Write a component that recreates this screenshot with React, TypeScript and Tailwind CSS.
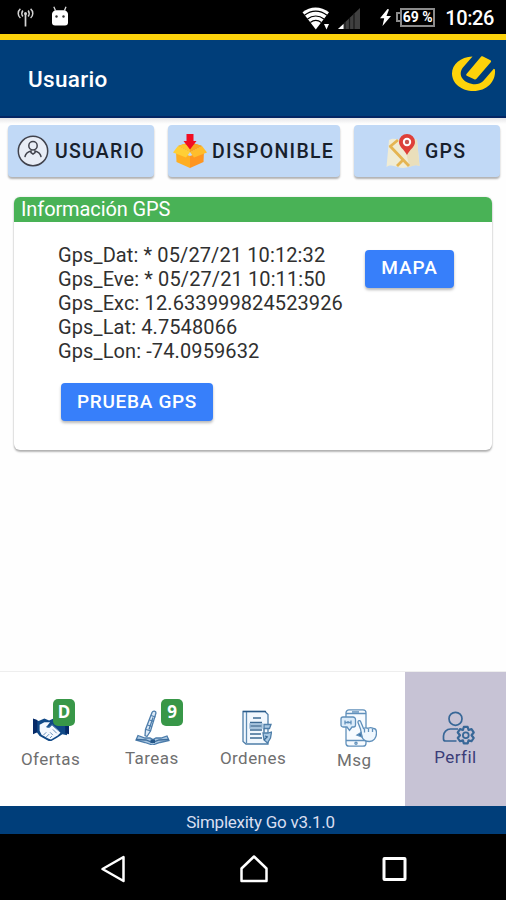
import type { ReactNode } from 'react';

type Tab = {
  label: string;
  icon: ReactNode;
  iconClass: string;
  labelClass: string;
  badge?: string;
  badgeClass?: string;
  active?: boolean;
};

const GPS_ROWS = [
  'Gps_Dat: * 05/27/21 10:12:32',
  'Gps_Eve: * 05/27/21 10:11:50',
  'Gps_Exc: 12.633999824523926',
  'Gps_Lat: 4.7548066',
  'Gps_Lon: -74.0959632',
];

function AntennaIcon() {
  return (
    <svg width="17" height="19" viewBox="0 0 17 19" fill="none" stroke="#d4d4d4" strokeWidth="1.5">
      <path d="M8.5 6v12.5" strokeWidth="1.7" />
      <circle cx="8.5" cy="5.5" r="1.5" fill="#d4d4d4" stroke="none" />
      <path d="M5.8 2.5c-1.2 1.8-1.2 4.2 0 6M11.2 2.5c1.2 1.8 1.2 4.2 0 6" />
      <path d="M3.4.9C.5 3.3.5 7.7 3.4 10M13.6.9c2.9 2.4 2.9 6.8 0 9.1" />
    </svg>
  );
}

function RobotIcon() {
  return (
    <svg width="18" height="20" viewBox="0 0 18 20">
      <path d="M4.5 4.5 2.8.8M13.5 4.5 15 .8" stroke="#ddd" strokeWidth="1.3" />
      <path d="M1 7.500c.7-2 2-3 4-3.300h8c2 .3 3.300 1.300 4 3.300v9a3 3 0 0 1-3 3H4a3 3 0 0 1-3-3z" fill="#fff" />
      <circle cx="5.5" cy="10.5" r="1.2" fill="#333" />
      <circle cx="12.5" cy="10.5" r="1.2" fill="#333" />
    </svg>
  );
}

function WifiIcon() {
  return (
    <svg width="28" height="24" viewBox="0 0 28 24">
      <path d="M.5 5.2C8-1.2 19-1.2 27 5.2L13.8 22.5z" fill="#fff" />
      <g fill="none" stroke="#000" strokeWidth="1.2">
        <path d="M2.5 8.3c7-5.6 15.5-5.6 22.5 0" />
        <path d="M5.5 12c5-4 11.5-4 16.5 0" />
        <path d="M8.3 15.5c3.4-2.5 7.6-2.5 11 0" />
      </g>
      <path d="M21 15h7v3l-3.5 5.5L21 18z" fill="#000" />
      <path d="M22 17h5l-2.5 5.5z" fill="#fff" />
    </svg>
  );
}

function SignalIcon() {
  return (
    <svg width="22" height="21" viewBox="0 0 22 21">
      <path d="M0 21 22 0v21z" fill="#404040" />
      <path d="M7 14v7M11.5 10v11M16 5.5V21" stroke="#1a1a1a" strokeWidth="1.2" />
      <path d="M0 21l5.5-5v5z" fill="#fff" />
    </svg>
  );
}

function BatteryIcon() {
  return (
    <div className="flex h-[20px] items-center">
      <div className="h-2.5 w-[4px] border-2 border-r-0 border-[#8b8b8b]" />
      <div className="flex h-[19px] w-[35px] items-center justify-center border-2 border-[#8b8b8b]">
        <span className="text-[14px] leading-none font-bold whitespace-nowrap text-white">69 %</span>
      </div>
    </div>
  );
}

function StatusBar() {
  return (
    <div className="flex h-[34px] shrink-0 items-start bg-black">
      <div className="pt-2 pl-[17px]">
        <AntennaIcon />
      </div>
      <div className="pt-1.5 pl-[17px]">
        <RobotIcon />
      </div>
      <div className="ml-auto flex">
        <div className="pt-[7px] pr-[8px]">
          <WifiIcon />
        </div>
        <div className="pt-2 pr-[20px]">
          <SignalIcon />
        </div>
        <svg className="mt-[9px] mr-[5px]" width="11" height="17" viewBox="0 0 11 17">
          <path d="M7.500 0 0 9.300h4.200L2.500 17 11 7H6.500L9 .5z" fill="#fff" />
        </svg>
        <div className="pt-[7px] pr-[10px]">
          <BatteryIcon />
        </div>
        <span className="mr-[12px] pt-[7px] text-[20px] leading-[22px] font-medium tracking-[-0.4px] text-white">
          10:26
        </span>
      </div>
    </div>
  );
}

function BrandLogo() {
  return (
    <svg width="44" height="36" viewBox="0 0 44 36" fill="#fed30a">
      <path d="M20.500.5C8.500 1 0 8.500 0 17.500 0 27.500 9.500 35 21.500 35 34.500 35 44 26 43 13.500l-1.200-.8L31 25.300c-4 3.700-10 3.700-15.500 1.200C8.500 23.300 7 17 10.500 12z" />
      <path d="M29 .8c.6-.6 1.200-.6 2-.2l7.500 3.600c.7.5.8 1.200.2 2L24.500 22.800c-.7.700-1.500.7-2.300.4l-7.500-3.500c-.6-.4-.7-1-.2-1.700z" />
    </svg>
  );
}

function UserCircleIcon() {
  return (
    <svg width="32" height="32" viewBox="0 0 32 32" fill="none" stroke="#40424c">
      <circle cx="16" cy="16" r="14.7" fill="#e8edf6" strokeWidth="1.5" />
      <circle cx="16" cy="10.8" r="4.2" strokeWidth="1.5" />
      <path
        d="M8 21.5c.6-2.700 3-4.700 6-5.500v1.500l2 1.500 2-1.500V16c3 .8 5.400 2.800 6 5.500"
        strokeWidth="1.5"
        strokeLinecap="round"
      />
    </svg>
  );
}

function BoxIcon() {
  return (
    <svg width="34" height="34" viewBox="0 0 34 34">
      <path d="M3 17l14 5v12L3.5 28z" fill="#ffae21" />
      <path d="M31 17l-14 5v12l13.5-6z" fill="#ff9520" />
      <path d="M5 12l12-4 12 4-12 6z" fill="#e9971c" />
      <path d="M5 12l12 6-4 5.5L0 18.5z" fill="#ffcf35" />
      <path d="M29 12l-12 6 4 5.5 13-5z" fill="#ffbd2c" />
      <path d="M5 12l6-2 6 2v6z" fill="#ffc52f" />
      <path d="M29 12l-6-2-6 2v6z" fill="#f9a520" />
      <path d="M13.5 0h7v7h3L17 15.5 10.5 7h3z" fill="#f20d22" />
    </svg>
  );
}

function MapPinIcon() {
  return (
    <svg width="34" height="34" viewBox="0 0 34 34">
      <path d="M3 6c5-3 9 0 14 0s9-3 14 0l2.500 26c-6-3-10 2-16.500 2-6 0-11-5-16.500-1z" fill="#f0ecd4" />
      <path d="M17 6c5 0 9-3 14 0l2.500 26c-4-2-7 0-10 1z" fill="#eadfbb" />
      <path d="M3.5 13 12 6M4 12l19 20M11 32l7-7" fill="none" stroke="#e5b552" strokeWidth="2.8" />
      <path d="M21 0a8 8 0 0 0-8 8c0 5 5 7 8 13 3-6 8-8 8-13a8 8 0 0 0-8-8z" fill="#df4039" />
      <circle cx="21" cy="8" r="4.2" fill="#fff" />
      <circle cx="21" cy="8" r="2.2" fill="#c85550" />
    </svg>
  );
}

function HandshakeIcon() {
  return (
    <svg width="36" height="25" viewBox="0 0 38 26">
      <path d="M0 3l6 2 6-2.500 5 2 7-3 7 2.500 5-1v17l-5-1-6 4-7 4-11-6-3-4-4 .5z" fill="#114987" />
      <path d="M0 2.500 4.500 4v13L0 19zM38 3l-4 1.500V18l4 1z" fill="#062a68" />
      <path d="M7 9l5-2.500h6l-4 5c2 1.500 4 .5 6-2l9 8-3 3-7 4-3-1-7-4-2-4z" fill="#f5f9ff" />
      <path
        d="M14 11c2 1.500 4 .5 6-2l8 7M21 14l4 4M18 17l3 3M14 17l-3 3M17 19l-3 3M20 21l-2 2"
        fill="none"
        stroke="#5c88b5"
        strokeWidth="1"
      />
    </svg>
  );
}

function PenBookIcon() {
  return (
    <svg width="36" height="35" viewBox="0 0 36 35" fill="none" stroke="#4d7dab" strokeWidth="1.3">
      <path d="M17 2.500c1-2.200 4-1.800 4 .5L15.500 21l-3.500 5.500-2-1 .5-6z" fill="#dceaf7" />
      <path d="M16 5.500l4.500 1.500M14.500 10l4.500 1.500M12.500 15l4.500 1.500M11 19.500l5 1.500M18 7.500l-4 12" />
      <path d="M3 25.500l7 2.500h5l3 1.500 3-1.500h5l6-2 2 4.500-9 2-7.500 2.500-7.500-2.500L1 30z" fill="#a9c7e2" />
      <path d="M1 29.500l10 .5 6.500 2.500L24 30l10-.5" stroke="#3d6d9d" />
      <path d="M15.500 29.500h4.500V33h-4.500z" fill="#255789" stroke="none" />
    </svg>
  );
}

function OrdersIcon() {
  return (
    <svg width="30" height="35" viewBox="0 0 30 35" fill="none" stroke="#4d7da8" strokeWidth="1.3">
      <path d="M1 1.500h22l3 3V34H4l-3-2.500z" fill="#f2f8fe" />
      <path d="M4.500 2v31" stroke="#5d8bb3" />
      <path d="M1 1.500h23" stroke="#2a5a88" />
      <path d="M11 8h8M8 12.500h12M8 16h12M8 20h12M8 24h11M8 28h12" stroke="#3e6b94" />
      <path d="M8 14h12v4H8z" stroke="#8eb2d2" />
      <path d="M22 14.500h7l-1.500 4H22zM21 23h5l3.500-1-1 6-3 5-3.500-3z" fill="#a8c8e3" />
      <path d="M22 18.500v4M23 26l3 1M22 30l3-3" stroke="#3a6b97" />
    </svg>
  );
}

function MessageIcon() {
  return (
    <svg width="37" height="38" viewBox="0 0 37 38" fill="none" stroke="#6090bb" strokeWidth="1.3">
      <rect x="6" y=".8" width="20" height="36.4" rx="3" fill="#f7fbff" />
      <path d="M6 4.500h20M6 31.500h20M12 2.800h7" />
      <circle cx="16" cy="34.3" r="1.1" />
      <path
        d="M3 8h10a2.500 2.500 0 0 1 2.500 2.500V16a2 2 0 0 1-2 2H12l-2.500 3.500L7 18H3a2 2 0 0 1-2-2v-6a2 2 0 0 1 2-2z"
        fill="#dcecfa"
      />
      <path d="M5 11.500v4M8 12v2.500M11 11.500v4M5 13.500h6" />
      <path
        d="M20.500 20l-2.500-6.500c-.3-2 2-2.500 2.700-.8l2.800 6.800c2-1.500 4 0 5-.3 3-1.500 4 .3 5 .3 2 0 3 1.500 3 4.500 0 5-3 8.500-7 8.500-4.500 0-6.500-1.500-7.500-4.500z"
        fill="#eff7fe"
      />
      <path d="M24.500 20v3.500M28.500 20v3M32.500 20v3" />
      <path d="M17 26l4-2.500 1 4.500z" fill="#3c6c99" />
    </svg>
  );
}

function ProfileIcon() {
  return (
    <svg width="34" height="35" viewBox="0 0 34 35" fill="none" stroke="#386797" strokeWidth="1.7">
      <circle cx="13.5" cy="7.8" r="6.5" />
      <path d="M16 18H8.500a7 7 0 0 0-7 7v3a2 2 0 0 0 2 2h11" />
      <path
        transform="translate(23.8 24.2) scale(1.1) translate(-23.8 -24.2)"
        d="M21.200 19.500l.8-2.800h3.500l.8 2.800 2.700-.8 2 3-2 2.500 2 2.500-2 3-2.700-.8-.8 2.800H22l-.8-2.800-2.700.8-2-3 2-2.500-2-2.500 2-3z"
        strokeLinejoin="round"
        strokeWidth="2"
      />
      <circle cx="23.8" cy="24.2" r="2.9" strokeWidth="1.8" />
    </svg>
  );
}

const TABS: Tab[] = [
  {
    label: 'Ofertas',
    icon: <HandshakeIcon />,
    iconClass: 'pt-[44px] pl-[33px]',
    labelClass: 'mt-[8px] text-[#6f6f6f]',
    badge: 'D',
    badgeClass: 'left-[53px]',
  },
  {
    label: 'Tareas',
    icon: <PenBookIcon />,
    iconClass: 'pt-[38px] pl-[34px]',
    labelClass: 'mt-[3px] text-[#6f6f6f]',
    badge: '9',
    badgeClass: 'left-[60px]',
  },
  {
    label: 'Ordenes',
    icon: <OrdersIcon />,
    iconClass: 'pt-[38px] pl-[40px]',
    labelClass: 'mt-[3px] text-[#6f6f6f]',
  },
  {
    label: 'Msg',
    icon: <MessageIcon />,
    iconClass: 'pt-[37px] pl-[36px]',
    labelClass: 'mt-[3px] text-[#6f6f6f]',
  },
  {
    label: 'Perfil',
    icon: <ProfileIcon />,
    iconClass: 'pt-[39px] pl-[37px]',
    labelClass: 'mt-px text-[#3b3d78]',
    active: true,
  },
];

function TabButton({ tab }: { tab: Tab }) {
  return (
    <button className={`relative flex flex-1 flex-col items-stretch ${tab.active ? 'bg-[#c7c3d5]' : 'bg-white'}`}>
      <span className={`block ${tab.iconClass}`}>{tab.icon}</span>
      <span className={`block text-center text-[17px] leading-[20px] tracking-[0.45px] ${tab.labelClass}`}>
        {tab.label}
      </span>
      {tab.badge && (
        <span
          className={`absolute top-[27px] flex h-[27px] w-[22px] items-center justify-center rounded-[5px] bg-[#389748] pb-[3px] font-['Noto_Sans',sans-serif] text-[17px] leading-none font-bold text-white ${tab.badgeClass}`}
        >
          {tab.badge}
        </span>
      )}
    </button>
  );
}

function TopButton({ children, className }: { children: ReactNode; className: string }) {
  return (
    <button
      className={`flex h-[52px] items-center rounded-[4px] bg-[#c1d9f6] text-[19.5px] font-medium text-[#17202c] shadow-[0_2px_2px_rgba(0,0,0,0.3)] ${className}`}
    >
      {children}
    </button>
  );
}

export default function App() {
  return (
    <main className="flex h-[900px] w-[506px] flex-col overflow-hidden bg-[#fefefe] font-[Roboto,sans-serif]">
      <StatusBar />

      <header className="flex h-[84px] shrink-0 items-start justify-between border-t-[6px] border-b-2 border-t-[#fcd20b] border-b-[#042663] bg-[#003e7a] pr-[10px] pl-[28px]">
        <h1 className="pt-[26px] text-[22.5px] leading-[26px] font-medium tracking-[0.3px] text-white">Usuario</h1>
        <div className="pt-[16px]">
          <BrandLogo />
        </div>
      </header>

      <div className="flex justify-between bg-linear-to-b from-[#e6e6e8] via-[#fefefe] via-10% to-[#fefefe] pt-[7px] pr-[6px] pl-[8px]">
        <TopButton className="w-[146px] pl-[9px]">
          <UserCircleIcon />
          <span className="mt-px ml-[6px] tracking-[1.25px]">USUARIO</span>
        </TopButton>
        <TopButton className="w-[172px] pl-[5px]">
          <BoxIcon />
          <span className="mt-px ml-[5px] tracking-[1.3px]">DISPONIBLE</span>
        </TopButton>
        <TopButton className="w-[146px] pl-[32px]">
          <MapPinIcon />
          <span className="mt-px ml-[5px] tracking-[1.25px]">GPS</span>
        </TopButton>
      </div>

      <section className="mx-[14px] mt-[20px] h-[253px] shrink-0 overflow-hidden rounded-[6px] bg-white shadow-[0_2px_2px_rgba(0,0,0,0.28),0_0_2px_rgba(0,0,0,0.16)]">
        <h2 className="h-[25px] bg-[#49b256] pl-[7px] text-[20px] leading-[24px] tracking-[-0.1px] text-white">
          Información GPS
        </h2>
        <div className="flex items-start pt-[21px] pl-[44px]">
          <div className="w-[307px] shrink-0 text-[20px] leading-[24px] tracking-[0.11px] text-[#303030]">
            {GPS_ROWS.map((row) => (
              <p key={row}>{row}</p>
            ))}
          </div>
          <button className="mt-[7px] h-[38px] w-[89px] rounded-[4px] bg-[#377ffa] pb-0.5 text-[19px] font-medium tracking-[0.9px] text-white shadow-[0_2px_3px_rgba(0,0,0,0.28)]">
            MAPA
          </button>
        </div>
        <button className="mt-[20px] ml-[47px] h-[38px] w-[152px] rounded-[4px] bg-[#377ffa] text-[19px] font-medium tracking-[0.7px] text-white shadow-[0_2px_3px_rgba(0,0,0,0.28)]">
          PRUEBA GPS
        </button>
      </section>

      <nav className="mt-auto flex h-[135px] shrink-0 border-t border-[#eeeeee]">
        {TABS.map((tab) => (
          <TabButton key={tab.label} tab={tab} />
        ))}
      </nav>

      <footer className="flex h-[28px] shrink-0 items-center justify-center bg-[#003e7a] pt-1 pl-[15px] text-[17px] leading-none tracking-[-0.25px] text-[#d9def0]">
        Simplexity Go v3.1.0
      </footer>

      <div className="flex h-[66px] shrink-0 items-start bg-black pt-[20px]">
        <svg className="ml-[100px]" width="26" height="30" viewBox="0 0 26 30" fill="none" stroke="#fff" strokeWidth="2.5">
          <path d="M2.500 15 23.500 3v24z" strokeLinejoin="round" />
        </svg>
        <svg className="ml-[113px]" width="30" height="30" viewBox="0 0 30 30" fill="none" stroke="#fff" strokeWidth="2.5">
          <path d="M2.500 14.500 15 2.500l12.500 12V27h-25z" strokeLinejoin="round" />
        </svg>
        <svg className="ml-[112px]" width="27" height="30" viewBox="0 0 27 30" fill="none" stroke="#fff" strokeWidth="3">
          <rect x="3" y="4.5" width="21" height="21" rx=".5" />
        </svg>
      </div>
    </main>
  );
}
